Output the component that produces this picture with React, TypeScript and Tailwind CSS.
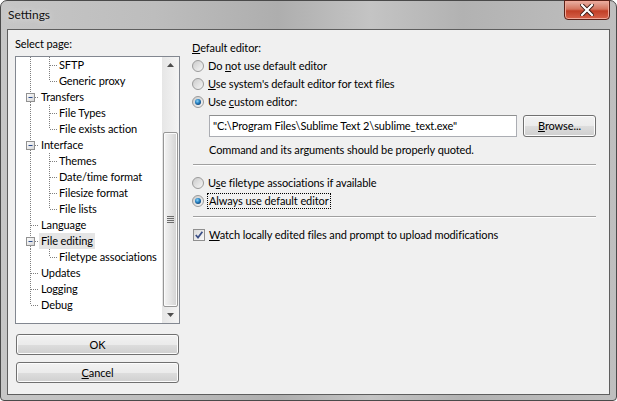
import React from "react";

type Row = {
  label: string;
  level: 1 | 2;
  box?: boolean;
  last?: boolean;
  selected?: boolean;
};

const rows: Row[] = [
  { label: "SFTP", level: 2 },
  { label: "Generic proxy", level: 2, last: true },
  { label: "Transfers", level: 1, box: true },
  { label: "File Types", level: 2 },
  { label: "File exists action", level: 2, last: true },
  { label: "Interface", level: 1, box: true },
  { label: "Themes", level: 2 },
  { label: "Date/time format", level: 2 },
  { label: "Filesize format", level: 2 },
  { label: "File lists", level: 2, last: true },
  { label: "Language", level: 1 },
  { label: "File editing", level: 1, box: true, selected: true },
  { label: "Filetype associations", level: 2, last: true },
  { label: "Updates", level: 1 },
  { label: "Logging", level: 1 },
  { label: "Debug", level: 1, last: true },
];

const dot = { stroke: "#7f7f7f", strokeWidth: 1, strokeDasharray: "1 1" };

function Gutter({ row }: { row: Row }) {
  const w = row.level === 1 ? 23 : 41;
  return (
    <svg width={w} height={16} className="shrink-0">
      {row.level === 2 && (
        <>
          <line x1={14.5} y1={0} x2={14.5} y2={16} {...dot} />
          <line x1={33.5} y1={0} x2={33.5} y2={row.last ? 8 : 16} {...dot} />
          <line x1={34} y1={8.5} x2={41} y2={8.5} {...dot} />
        </>
      )}
      {row.level === 1 && !row.box && (
        <>
          <line x1={14.5} y1={0} x2={14.5} y2={row.last ? 8 : 16} {...dot} />
          <line x1={15} y1={8.5} x2={22} y2={8.5} {...dot} />
        </>
      )}
      {row.level === 1 && row.box && (
        <>
          <line x1={14.5} y1={0} x2={14.5} y2={4} {...dot} />
          <line x1={14.5} y1={13} x2={14.5} y2={16} {...dot} />
          <line x1={19} y1={8.5} x2={22} y2={8.5} {...dot} />
          <defs>
            <linearGradient id="bx" x1="0" y1="0" x2="1" y2="1">
              <stop offset="0" stopColor="#ffffff" />
              <stop offset="1" stopColor="#d4d4d4" />
            </linearGradient>
          </defs>
          <rect x={10.5} y={4.5} width={8} height={8} fill="url(#bx)" stroke="#919191" />
          <line x1={12.5} y1={8.5} x2={16.5} y2={8.5} stroke="#2a4b8c" />
        </>
      )}
    </svg>
  );
}

function Radio({ checked }: { checked?: boolean }) {
  return (
    <svg width={12} height={12} viewBox="0 0 12 12" className="shrink-0">
      <defs>
        <linearGradient id="rg" x1="0" y1="0" x2="1" y2="1">
          <stop offset="0" stopColor="#c9c9c9" />
          <stop offset="1" stopColor="#f8f8f8" />
        </linearGradient>
        <radialGradient id="rd" cx="0.4" cy="0.35" r="0.7">
          <stop offset="0" stopColor="#8fd4f7" />
          <stop offset="0.5" stopColor="#2a86c6" />
          <stop offset="1" stopColor="#0d3f73" />
        </radialGradient>
      </defs>
      <circle cx={6} cy={6} r={5.5} fill="url(#rg)" stroke="#9a9a9a" />
      {checked && <circle cx={6} cy={6} r={3} fill="url(#rd)" />}
    </svg>
  );
}

function Check() {
  return (
    <svg width={12} height={12} viewBox="0 0 12 12" className="shrink-0">
      <defs>
        <linearGradient id="cg" x1="0" y1="0" x2="1" y2="1">
          <stop offset="0" stopColor="#d8d8d8" />
          <stop offset="1" stopColor="#fbfbfb" />
        </linearGradient>
      </defs>
      <rect x={0.5} y={0.5} width={11} height={11} fill="url(#cg)" stroke="#8f8f8f" />
      <path d="M2.8 6 L5 8.6 L9.4 2.8" fill="none" stroke="#3b4f86" strokeWidth={1.7} />
    </svg>
  );
}

const btn =
  "flex items-center justify-center rounded-[3px] border border-[#707070] bg-[linear-gradient(to_bottom,#f2f2f2_0%,#ebebeb_50%,#dddddd_51%,#cfcfcf_100%)] shadow-[inset_0_0_0_1px_#fcfcfc] text-black";

function Sep() {
  return <div className="mt-[6px] h-[2px] border-t border-[#a0a0a0] border-b-white border-b ml-[1px]" />;
}

export default function App() {
  return (
    <div className="w-[617px] h-[401px] bg-white font-['Lato',sans-serif] text-[11px] tracking-[-0.1px] text-black leading-[16px]">
      <div className="flex flex-col w-full h-full rounded-t-[7px] rounded-b-[4px] border border-[#4a4a4a] bg-[linear-gradient(to_right,#c6c6c6_0%,#bdbdbd_25%,#aeaeae_45%,#c4c4c4_60%,#b2b2b2_75%,#bfbfbf_100%)]">
        <div className="h-[28px] shrink-0 flex items-start relative">
          <span className="ml-[7px] mt-[6px] text-[12px] tracking-normal text-[#111] [text-shadow:0_0_6px_#e8e8e8]">Settings</span>
          <div className="ml-auto mr-[6px] -mt-px w-[46px] h-[20px] rounded-b-[4px] border border-[#5a2118] bg-[linear-gradient(to_bottom,#e8b0a4_0%,#d4745e_45%,#c13f26_55%,#d7634b_100%)] shadow-[inset_0_0_0_1px_#f0a898] flex items-center justify-center">
            <svg width={14} height={12} viewBox="0 0 14 12">
              <path d="M2 1 L12 11 M12 1 L2 11" stroke="#3a1a14" strokeWidth={4} strokeLinecap="square" />
              <path d="M2 1 L12 11 M12 1 L2 11" stroke="#ffffff" strokeWidth={2.2} strokeLinecap="square" />
            </svg>
          </div>
        </div>
        <div className="flex-1 mx-[6px] mb-[5px] border border-[#5e5e5e] bg-[#f0f0f0] flex">
          {/* left column */}
          <div className="ml-[7px] w-[165px] flex flex-col">
            <div className="mt-[6px] h-[16px]">Select page:</div>
            <div className="mt-[4px] h-[268px] border border-[#828790] bg-white flex">
              <div className="flex-1 flex flex-col overflow-hidden">
                {rows.map((r) => (
                  <div key={r.label} className="h-[16px] flex items-stretch shrink-0">
                    <Gutter row={r} />
                    <span className={"px-[2px] whitespace-nowrap " + (r.selected ? "bg-[#e5e5e5]" : "")}>{r.label}</span>
                  </div>
                ))}
              </div>
              <div className="w-[17px] flex flex-col bg-[linear-gradient(to_right,#e6e6e6,#f4f4f4)]">
                <div className="h-[17px] flex items-center justify-center">
                  <svg width={7} height={4}><path d="M0 4 L3.5 0 L7 4 Z" fill="#4d4d4d" /></svg>
                </div>
                <div className="flex-1 flex flex-col">
                  <div className="mt-[58px] h-[175px] mx-[1px] rounded-[2px] border border-[#979797] bg-[linear-gradient(to_right,#f4f4f4,#e4e4e4_50%,#d2d2d2)] shadow-[inset_0_0_0_1px_#fbfbfb] flex items-center justify-center">
                    <div className="flex flex-col gap-[1px]">
                      <div className="w-[7px] h-px bg-[#6c6c6c]" />
                      <div className="w-[7px] h-px bg-[#6c6c6c]" />
                      <div className="w-[7px] h-px bg-[#6c6c6c]" />
                      <div className="w-[7px] h-px bg-[#6c6c6c]" />
                    </div>
                  </div>
                </div>
                <div className="h-[17px] flex items-center justify-center">
                  <svg width={7} height={4}><path d="M0 0 L3.5 4 L7 0 Z" fill="#4d4d4d" /></svg>
                </div>
              </div>
            </div>
            <div className={btn + " mt-[10px] h-[21px] mx-[1px]"}>OK</div>
            <div className={btn + " mt-[7px] h-[21px] mx-[1px]"}>
              <span><u>C</u>ancel</span>
            </div>
          </div>

          {/* right column */}
          <div className="ml-[12px] w-[404px] flex flex-col pt-[9px]">
            <div className="h-[18px] flex items-center"><span><u>D</u>efault editor:</span></div>
            <div className="h-[18px] flex items-center gap-[4px]"><Radio /><span>Do <u>n</u>ot use default editor</span></div>
            <div className="h-[18px] flex items-center gap-[4px]"><Radio /><span><u>U</u>se system's default editor for text files</span></div>
            <div className="h-[18px] flex items-center gap-[4px]"><Radio checked /><span>Use <u>c</u>ustom editor:</span></div>
            <div className="mt-[4px] ml-[17px] flex gap-[6px]">
              <div className="w-[308px] h-[22px] border border-[#abadb3] border-t-[#8e8f8f] bg-white flex items-center px-[3px] whitespace-nowrap">
                {'"C:\\Program Files\\Sublime Text 2\\sublime_text.exe"'}
              </div>
              <div className={btn + " w-[73px] h-[22px]"}>
                <span><u>B</u>rowse...</span>
              </div>
            </div>
            <div className="mt-[5px] ml-[17px] h-[16px]">Command and its arguments should be properly quoted.</div>
            <Sep />
            <div className="mt-[8px] h-[18px] flex items-center gap-[4px]"><Radio /><span>U<u>s</u>e filetype associations if available</span></div>
            <div className="h-[18px] flex items-center gap-[3px]">
              <Radio checked />
              <span className="border border-dotted border-black px-px leading-[14px]">Always use default editor</span>
            </div>
            <Sep />
            <div className="mt-[8px] h-[18px] flex items-center gap-[4px] ml-[1px]"><Check /><span><u>W</u>atch locally edited files and prompt to upload modifications</span></div>
          </div>
        </div>
      </div>
    </div>
  );
}
